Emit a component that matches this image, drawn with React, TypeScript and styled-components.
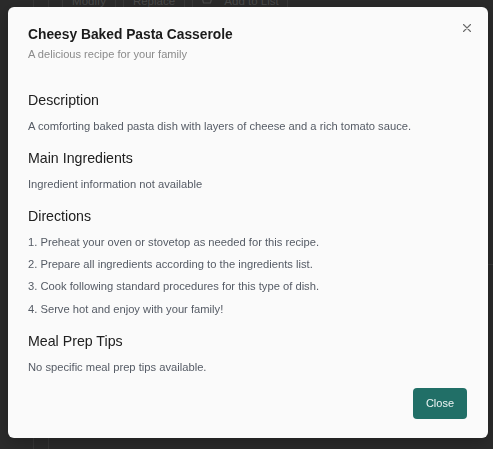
import React from "react";
import styled, { createGlobalStyle } from "styled-components";

const Global = createGlobalStyle`
  html, body { margin: 0; padding: 0; background: #2b2b2b; }
  body { font-family: "Liberation Sans", Arial, Helvetica, sans-serif; overflow: hidden; }
  * { box-sizing: border-box; }
`;

/* ---------- dimmed page behind the dialog ---------- */
const Page = styled.div`
  display: flex;
  height: 449px;
  background: #2b2b2b;
`;

const Rail = styled.div<{ $w: number }>`
  width: ${(p) => p.$w}px;
  flex: none;
  border-right: 1px solid #363636;
`;

const Main = styled.div`
  flex: 1;
  display: flex;
  flex-direction: column;
  padding-left: 13px;
`;

const Toolbar = styled.div`
  display: flex;
  gap: 7px;
  margin-top: -8px;
  height: 18px;
`;

const GhostButton = styled.div<{ $w: number }>`
  width: ${(p) => p.$w}px;
  display: flex;
  align-items: center;
  justify-content: center;
  gap: 11px;
  border-left: 1px solid #383838;
  border-right: 1px solid #383838;
  color: #4a4a4a;
  font-size: 11.5px;
`;

const Divider = styled.div`
  margin-top: 254px;
  border-top: 1px solid #383838;
`;

/* ---------- dialog ---------- */
const Dialog = styled.div`
  position: fixed;
  top: 7px;
  left: 8px;
  width: 480px;
  background: #fafafa;
  border-radius: 6px;
  padding: 18px 21px 19px 20px;
  display: flex;
  flex-direction: column;
  box-shadow: 0 4px 16px rgba(0, 0, 0, 0.25);
`;

const CloseX = styled.button`
  position: absolute;
  top: 13px;
  right: 13px;
  width: 16px;
  height: 16px;
  padding: 0;
  border: none;
  background: transparent;
  display: flex;
  align-items: center;
  justify-content: center;
  color: #6a6a6a;
`;

const Title = styled.h2`
  margin: 0;
  font-size: 13.8px;
  line-height: 20px;
  font-weight: 700;
  color: #1b1b1b;
`;

const Subtitle = styled.p`
  margin: 1px 0 0;
  font-size: 11.1px;
  line-height: 16px;
  color: #8b8b8b;
`;

const Body = styled.div`
  margin-top: 28px;
  display: flex;
  flex-direction: column;
  gap: 14.5px;
`;

const Section = styled.section`
  display: flex;
  flex-direction: column;
  gap: 7.5px;
`;

const Heading = styled.h3`
  margin: 0;
  font-size: 14.2px;
  line-height: 20px;
  font-weight: 400;
  color: #202020;
`;

const Text = styled.p`
  margin: 0;
  font-size: 11.2px;
  line-height: 16px;
  color: #555b65;
`;

const Steps = styled.ol`
  margin: 0;
  padding: 0;
  list-style: decimal inside;
  display: flex;
  flex-direction: column;
  gap: 6.4px;
`;

const Step = styled.li`
  font-size: 11.2px;
  line-height: 16px;
  color: #555b65;
`;

const Footer = styled.div`
  margin-top: 13px;
  display: flex;
  justify-content: flex-end;
`;

const PrimaryButton = styled.button`
  height: 31px;
  padding: 0 13px;
  border: none;
  border-radius: 4px;
  background: #216f67;
  color: #eef5f4;
  font-family: inherit;
  font-size: 11px;
`;

const steps = [
  "Preheat your oven or stovetop as needed for this recipe.",
  "Prepare all ingredients according to the ingredients list.",
  "Cook following standard procedures for this type of dish.",
  "Serve hot and enjoy with your family!",
];

export default function App() {
  return (
    <>
      <Global />
      <Page>
        <Rail $w={34} />
        <Rail $w={15} />
        <Main>
          <Toolbar>
            <GhostButton $w={54}>Modify</GhostButton>
            <GhostButton $w={62}>Replace</GhostButton>
            <GhostButton $w={96}>
              <svg width="12" height="10" viewBox="0 0 12 10" fill="none" stroke="#4a4a4a" strokeWidth="1.2">
                <path d="M1 1h10l-1.5 6h-7z" />
              </svg>
              Add to List
            </GhostButton>
          </Toolbar>
          <Divider />
        </Main>
      </Page>

      <Dialog role="dialog" aria-modal="true">
        <CloseX aria-label="Close">
          <svg width="8" height="8" viewBox="0 0 8 8" stroke="currentColor" strokeWidth="1.1" strokeLinecap="round">
            <path d="M0.5 0.5l7 7M7.5 0.5l-7 7" />
          </svg>
        </CloseX>
        <Title>Cheesy Baked Pasta Casserole</Title>
        <Subtitle>A delicious recipe for your family</Subtitle>
        <Body>
          <Section>
            <Heading>Description</Heading>
            <Text>A comforting baked pasta dish with layers of cheese and a rich tomato sauce.</Text>
          </Section>
          <Section>
            <Heading>Main Ingredients</Heading>
            <Text>Ingredient information not available</Text>
          </Section>
          <Section>
            <Heading>Directions</Heading>
            <Steps>
              {steps.map((s) => (
                <Step key={s}>{s}</Step>
              ))}
            </Steps>
          </Section>
          <Section>
            <Heading>Meal Prep Tips</Heading>
            <Text>No specific meal prep tips available.</Text>
          </Section>
        </Body>
        <Footer>
          <PrimaryButton>Close</PrimaryButton>
        </Footer>
      </Dialog>
    </>
  );
}
